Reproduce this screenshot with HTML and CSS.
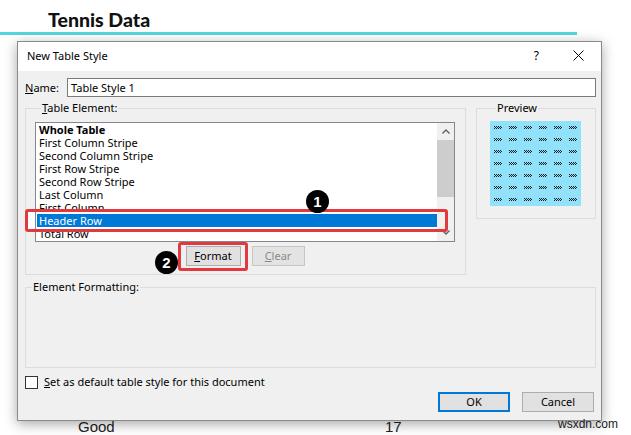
FILE: index.html
```html
<!DOCTYPE html>
<html lang="en">
<head>
  <meta charset="UTF-8">
  <meta name="viewport" content="width=device-width, initial-scale=1">
  <title>Tennis Data - New Table Style</title>
  <link rel="stylesheet" href="styles.css">
</head>
<body>
  <div class="sheet">
    <h1 class="sheet-title">Tennis Data</h1>
    <div class="sheet-rule"></div>
    <div class="sheet-row">
      <span class="cell-label">Good</span>
      <span class="cell-num">17</span>
    </div>
  </div>

  <div class="dialog">
    <div class="dialog-title">
      <span class="caption">New Table Style</span>
      <span class="help">?</span>
      <svg class="close" width="11" height="11" viewBox="0 0 11 11">
        <path d="M0.5 0.5 L10.5 10.5 M10.5 0.5 L0.5 10.5" stroke="#000" stroke-width="1" fill="none"/>
      </svg>
    </div>

    <div class="dialog-body">
      <div class="name-row">
        <label class="name-label"><u>N</u>ame:</label>
        <div class="textbox">Table Style 1</div>
      </div>

      <div class="groups">
        <fieldset class="group element-group">
          <legend><u>T</u>able Element:</legend>
          <div class="listbox">
            <ul class="items">
              <li class="bold">Whole Table</li>
              <li>First Column Stripe</li>
              <li>Second Column Stripe</li>
              <li>First Row Stripe</li>
              <li>Second Row Stripe</li>
              <li>Last Column</li>
              <li>First Column</li>
              <li class="selected">Header Row</li>
              <li>Total Row</li>
            </ul>
            <div class="scrollbar">
              <div class="scroll-btn">
                <svg width="8" height="5" viewBox="0 0 8 5"><polyline points="0.5,4.5 4,1 7.5,4.5" fill="none" stroke="#606060" stroke-width="1.4"/></svg>
              </div>
              <div class="scroll-thumb"></div>
              <div class="scroll-track"></div>
              <div class="scroll-btn">
                <svg width="8" height="5" viewBox="0 0 8 5"><polyline points="0.5,0.5 4,4 7.5,0.5" fill="none" stroke="#606060" stroke-width="1.4"/></svg>
              </div>
            </div>
          </div>
          <div class="group-buttons">
            <button class="btn btn-format"><u>F</u>ormat</button>
            <button class="btn btn-clear" disabled><u>C</u>lear</button>
          </div>
        </fieldset>

        <fieldset class="group preview-group">
          <legend>Preview</legend>
          <svg class="preview-grid" width="91" height="85" viewBox="0 0 91 85">
            <defs>
              <pattern id="cell" x="1" y="0" width="15" height="12" patternUnits="userSpaceOnUse">
                <g fill="#1c1c1c">
                  <rect x="3" y="5" width="1" height="1"/><rect x="5" y="5" width="1" height="1"/>
                  <rect x="7" y="5" width="1" height="1"/><rect x="9" y="5" width="1" height="1"/>
                  <rect x="4" y="6" width="1" height="1"/><rect x="6" y="6" width="1" height="1"/>
                  <rect x="8" y="6" width="1" height="1"/><rect x="10" y="6" width="1" height="1"/>
                  <rect x="3" y="7" width="1" height="1"/><rect x="5" y="7" width="1" height="1"/>
                  <rect x="7" y="7" width="1" height="1"/><rect x="9" y="7" width="1" height="1"/>
                </g>
              </pattern>
            </defs>
            <rect width="91" height="85" fill="#8fe2fa"/>
            <rect width="91" height="85" fill="url(#cell)"/>
          </svg>
        </fieldset>
      </div>

      <fieldset class="group format-group">
        <legend>Element Formatting:</legend>
      </fieldset>

      <label class="check-row">
        <span class="checkbox"></span>
        <span><u>S</u>et as default table style for this document</span>
      </label>

      <div class="dialog-buttons">
        <button class="btn btn-default">OK</button>
        <button class="btn">Cancel</button>
      </div>
    </div>

    <!-- step callouts drawn on top of the dialog -->
    <div class="callout callout-row"></div>
    <div class="callout callout-format"></div>
    <span class="badge badge-one">1</span>
    <span class="badge badge-two">2</span>
  </div>

  <div class="watermark">wsxdn.com</div>
</body>
</html>
```

FILE: styles.css
```css
* { margin: 0; padding: 0; box-sizing: border-box; }
body { width: 631px; height: 435px; overflow: hidden; position: relative; background: #fff; font-family: "Noto Sans", "Open Sans", sans-serif; color: #000; }

/* worksheet behind the dialog */
.sheet { padding-top: 9px; }
.sheet-title { font-family: Lato, "Noto Sans", sans-serif; font-weight: 900; font-size: 19.5px; line-height: 22px; padding-left: 48px; color: #111; }
.sheet-rule { width: 577px; height: 3px; margin-top: 1px; background: #55d5df; }
.sheet-row { display: flex; margin-top: 383px; padding-left: 78px; font-family: "Liberation Sans", Arial, sans-serif; font-size: 15px; line-height: 18px; color: #222; }
.cell-label { width: 307px; }

/* dialog window */
.dialog { position: absolute; left: 17px; top: 41px; width: 585px; border: 1px solid #8a8a8a; background: #f0f0f0; box-shadow: 0 3px 12px rgba(0,0,0,0.35); font-size: 11px; }
.dialog-title { display: flex; align-items: center; height: 29px; padding: 0 17px 2px 9px; background: #fff; font-size: 11px; }
.caption { flex: 1; }
.help { font-size: 12px; }
.close { margin-left: 34px; }

.dialog-body { padding: 7px 5px 8px 7px; }
.name-row { display: flex; align-items: center; height: 19px; }
.name-label { width: 42px; }
.textbox { flex: 1; height: 19px; border: 1px solid #7a7a7a; background: #fff; padding-left: 3px; line-height: 17px; }

.groups { display: flex; gap: 10px; margin-top: 4px; align-items: flex-start; }
.group { border: 1px solid #dcdcdc; min-width: 0; }
.group legend { margin-left: 6px; padding: 0 1px; line-height: 14px; }

.element-group { width: 441px; padding: 7px 10px 8px 9px; }
.listbox { display: flex; height: 120px; border: 1px solid #828790; background: #fff; }
.items { flex: 1; list-style: none; }
.items li { height: 13px; line-height: 13px; padding-left: 3px; white-space: nowrap; }
.items .bold { font-weight: bold; }
.items .selected { margin-left: 1px; padding-left: 2px; background: #0078d7; color: #fff; }
.scrollbar { width: 17px; display: flex; flex-direction: column; background: #f0f0f0; }
.scroll-btn { height: 17px; display: flex; align-items: center; justify-content: center; }
.scroll-thumb { height: 57px; background: #cdcdcd; }
.scroll-track { flex: 1; }
.group-buttons { display: flex; justify-content: center; gap: 11px; margin-top: 4px; }

.preview-group { width: 120px; padding: 6px 0 12px 13px; }
.preview-grid { display: block; }

.format-group { height: 88px; margin-top: 5px; }

.check-row { display: flex; align-items: center; gap: 6px; height: 13px; line-height: 13px; margin-top: 8px; }
.check-row span:last-child { margin-top: -3px; }
.checkbox { width: 13px; height: 13px; border: 1px solid #333; background: #fff; }

.dialog-buttons { display: flex; justify-content: flex-end; gap: 12px; margin-top: 3px; padding-right: 2px; }

.btn { height: 20px; width: 72px; border: 1px solid #adadad; background: #e1e1e1; font-family: inherit; font-size: 11px; line-height: 18px; color: #000; }
.btn-format { width: 55px; }
.btn-clear { width: 53px; color: #8a8a8a; background: #e3e3e3; border-color: #c6c6c6; }
.btn-default { border: 2px solid #0078d7; line-height: 16px; }

/* numbered callouts */
.callout { position: absolute; border: 3px solid #e0393e; border-radius: 3px; }
.callout-row { left: 7px; top: 167px; width: 423px; height: 23px; background: linear-gradient(90deg, #fff 0 7px, transparent 7px); }
.callout-format { left: 160px; top: 200px; width: 70px; height: 29px; }
.badge { position: absolute; width: 23px; height: 23px; border-radius: 50%; background: #000; color: #fff; font-family: "Liberation Sans", Arial, sans-serif; font-weight: bold; font-size: 15px; line-height: 23px; text-align: center; }
.badge-one { left: 288px; top: 148px; }
.badge-two { left: 137px; top: 209px; }

.watermark { position: absolute; left: 558px; top: 417px; font-family: "Liberation Sans", Arial, sans-serif; font-size: 12px; line-height: 14px; color: #1a1a1a; }
```
